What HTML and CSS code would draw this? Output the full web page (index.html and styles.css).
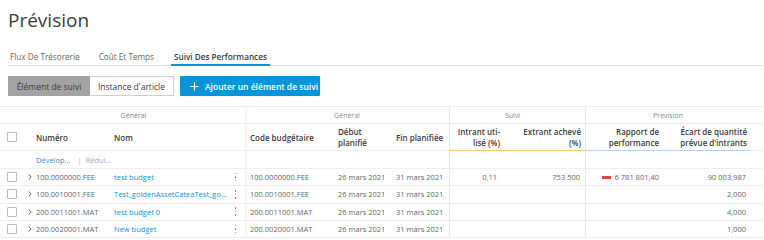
FILE: index.html
```html
<!DOCTYPE html>
<html lang="fr">
<head>
<meta charset="utf-8">
<title>Prévision</title>
<link rel="stylesheet" href="styles.css">
</head>
<body>
<div class="head">
  <h1 class="title">Prévision</h1>
  <nav class="tabs">
    <span class="tab">Flux De Trésorerie</span>
    <span class="tab">Coût Et Temps</span>
    <span class="tab active">Suivi Des Performances</span>
  </nav>
  <div class="toolbar">
    <div class="seg">
      <span class="seg-btn on">Élément de suivi</span>
      <span class="seg-btn">Instance d'article</span>
    </div>
    <button class="add-btn"><svg class="plus" width="9" height="9" viewBox="0 0 9 9"><path d="M4.5 0.5v8M0.5 4.5h8" stroke="#fff" stroke-width="1.1" fill="none"/></svg><span>Ajouter un élément de suivi</span></button>
  </div>
</div>

<div class="grid">
  <div class="row grp">
    <div class="c gcell g1">Général</div>
    <div class="c gcell g2 frz">Général</div>
    <div class="c gcell g3 vl">Suivi</div>
    <div class="c gcell g4 vl">Prévision</div>
    <div class="c gcell g5"></div>
  </div>
  <div class="row hdr">
    <div class="c"><span class="cb"></span></div>
    <div class="c pl">Numéro</div>
    <div class="c pl">Nom</div>
    <div class="c pl5 frz">Code budgétaire</div>
    <div class="c pl">Début<br>planifié</div>
    <div class="c pl">Fin planifiée</div>
    <div class="c r vl u-or pr5">Intrant uti-<br>lisé (%)</div>
    <div class="c r u-or pr4">Extrant achevé<br>(%)</div>
    <div class="c r vl u-bl pr6">Rapport de<br>performance</div>
    <div class="c r u-bl pr3">Écart de quantité<br>prévue d'intrants</div>
    <div class="c nob"></div>
  </div>
  <div class="row dev">
    <div class="c"></div>
    <div class="c pl span2"><span class="lnk2">Dévelop...</span><span class="sep">|</span><span class="mute">Rédui...</span></div>
    <div class="c frz"></div>
    <div class="c"></div>
    <div class="c"></div>
    <div class="c vl"></div>
    <div class="c"></div>
    <div class="c vl"></div>
    <div class="c"></div>
    <div class="c"></div>
  </div>

  <div class="row data">
    <div class="c"><span class="cb"></span></div>
    <div class="c num"><svg class="chev" width="4" height="6" viewBox="0 0 4 6"><path d="M0.6 0.5L3.2 3L0.6 5.5" stroke="#555" stroke-width="0.9" fill="none"/></svg>100.0000000.FEE</div>
    <div class="c pl name"><span class="lnk">test budget</span><span class="kebab"><i></i><i></i><i></i></span></div>
    <div class="c pl5 frz">100.0000000.FEE</div>
    <div class="c pl">26 mars 2021</div>
    <div class="c pl">31 mars 2021</div>
    <div class="c r vl pr8">0,11</div>
    <div class="c r pr5">753 500</div>
    <div class="c r vl pr6"><span class="bar"></span>6 781 801,40</div>
    <div class="c r pr4">90 003,987</div>
    <div class="c"></div>
  </div>
  <div class="row data">
    <div class="c"><span class="cb"></span></div>
    <div class="c num"><svg class="chev" width="4" height="6" viewBox="0 0 4 6"><path d="M0.6 0.5L3.2 3L0.6 5.5" stroke="#555" stroke-width="0.9" fill="none"/></svg>100.0010001.FEE</div>
    <div class="c pl name"><span class="lnk">Test_goldenAssetCateaTest_go...</span><span class="kebab"><i></i><i></i><i></i></span></div>
    <div class="c pl5 frz">100.0010001.FEE</div>
    <div class="c pl">26 mars 2021</div>
    <div class="c pl">31 mars 2021</div>
    <div class="c r vl pr8"></div>
    <div class="c r pr5"></div>
    <div class="c r vl pr6"></div>
    <div class="c r pr4">2,000</div>
    <div class="c"></div>
  </div>
  <div class="row data">
    <div class="c"><span class="cb"></span></div>
    <div class="c num"><svg class="chev" width="4" height="6" viewBox="0 0 4 6"><path d="M0.6 0.5L3.2 3L0.6 5.5" stroke="#555" stroke-width="0.9" fill="none"/></svg>200.0011001.MAT</div>
    <div class="c pl name"><span class="lnk">test budget 0</span><span class="kebab"><i></i><i></i><i></i></span></div>
    <div class="c pl5 frz">200.0011001.MAT</div>
    <div class="c pl">26 mars 2021</div>
    <div class="c pl">31 mars 2021</div>
    <div class="c r vl pr8"></div>
    <div class="c r pr5"></div>
    <div class="c r vl pr6"></div>
    <div class="c r pr4">4,000</div>
    <div class="c"></div>
  </div>
  <div class="row data">
    <div class="c"><span class="cb"></span></div>
    <div class="c num"><svg class="chev" width="4" height="6" viewBox="0 0 4 6"><path d="M0.6 0.5L3.2 3L0.6 5.5" stroke="#555" stroke-width="0.9" fill="none"/></svg>200.0020001.MAT</div>
    <div class="c pl name"><span class="lnk">New budget</span><span class="kebab"><i></i><i></i><i></i></span></div>
    <div class="c pl5 frz">200.0020001.MAT</div>
    <div class="c pl">26 mars 2021</div>
    <div class="c pl">31 mars 2021</div>
    <div class="c r vl pr8"></div>
    <div class="c r pr5"></div>
    <div class="c r vl pr6"></div>
    <div class="c r pr4">1,000</div>
    <div class="c"></div>
  </div>
</div>
</body>
</html>
```

FILE: styles.css
```css
* { box-sizing: border-box; }
html, body { margin: 0; background: #fff; }
body {
  font-family: "Open Sans", "Liberation Sans", sans-serif;
  color: #3c3c3c;
  overflow: hidden;
}
.head { padding-left: 8px; }
.title {
  margin: 0;
  padding-top: 8px;
  font-size: 19px;
  line-height: 24px;
  font-weight: 400;
  color: #3c3c3c;
}
.tabs {
  display: flex;
  gap: 15px;
  margin-top: 19px;
  border-bottom: 1px solid #e6e6e6;
  font-size: 8.2px;
  line-height: 11px;
}
.tab {
  padding: 0 2px 2px;
  color: #666;
  border-bottom: 2px solid transparent;
  margin-bottom: -1px;
}
.tab.active {
  color: #3c3c3c;
  font-weight: 600;
  border-bottom-color: #0696d7;
  padding: 0 3px 2px;
}
.toolbar {
  display: flex;
  gap: 6px;
  margin-top: 10px;
  height: 20px;
}
.seg { display: flex; }
.seg-btn {
  display: flex;
  align-items: center;
  justify-content: center;
  height: 20px;
  font-size: 8.5px;
  color: #3c3c3c;
  border: 1px solid #cfcfcf;
  white-space: nowrap;
}
.seg-btn.on { width: 82px; background: #a3a3a3; border-color: #a3a3a3; }
.seg-btn:not(.on) { width: 84px; border-left: 0; }
.add-btn {
  display: flex;
  align-items: center;
  gap: 6px;
  width: 140px;
  height: 20px;
  padding: 0 0 0 10px;
  border: 0;
  border-radius: 1px;
  background: #0696d7;
  color: #fff;
  font-family: inherit;
  font-size: 8.5px;
  font-weight: 600;
  white-space: nowrap;
}
.plus { flex: none; }

.grid {
  margin-top: 10px;
  width: 764px;
  font-size: 7.5px;
  color: #666;
}
.row {
  display: grid;
  grid-template-columns: 28px 78px 139px 85px 58px 61px 56px 80px 80px 85px 14px;
  border-bottom: 1px solid #eeeeee;
}
.c {
  display: flex;
  align-items: center;
  min-width: 0;
  white-space: nowrap;
}
.grp {
  height: 18px;
  border-top: 1px solid #ebebeb;
  color: #8a8a8a;
  font-size: 7px;
}
.gcell { justify-content: center; }
.g1 { grid-column: 1 / 4; padding-left: 22px; }
.g2 { grid-column: 4 / 7; }
.g3 { grid-column: 7 / 9; padding-right: 10px; }
.g4 { grid-column: 9 / 11; }
.g5 { grid-column: 11 / 12; }
.hdr {
  height: 27px;
  color: #3c3c3c;
  font-weight: 600;
  font-size: 8px;
  line-height: 11px;
  border-bottom: 0;
}
.hdr .c { border-bottom: 1px solid #eeeeee; }
.hdr .u-or { border-bottom: 1px solid #f8c57e; }
.hdr .u-bl { border-bottom: 1px solid #b9d2ea; }
.hdr .nob { border-bottom: 1px solid #eeeeee; }
.hdr .c.r { text-align: right; }
.dev { height: 18px; }
.span2 { grid-column: 2 / 4; }
.data { height: 17.25px; }

.pl { padding-left: 8px; }
.pl5 { padding-left: 5px; }
.r { justify-content: flex-end; }
.pr3 { padding-right: 3px; }
.pr4 { padding-right: 4px; }
.pr5 { padding-right: 5px; }
.pr6 { padding-right: 6px; }
.pr8 { padding-right: 8px; }
.vl { border-left: 1px solid #e8e8e8; }
.frz { background-image: linear-gradient(to right, rgba(0,0,0,0.05), rgba(0,0,0,0) 4px); }

.cb {
  display: block;
  width: 10px;
  height: 10px;
  margin-left: 7px;
  border: 1px solid #bdbdbd;
  border-radius: 1px;
  background: #fff;
}
.num { gap: 4px; }
.chev { flex: none; }
.name { justify-content: space-between; padding-right: 9px; }
.lnk { color: #0696d7; }
.kebab {
  display: flex;
  flex-direction: column;
  gap: 2px;
  flex: none;
}
.kebab i { display: block; width: 1.5px; height: 1.5px; background: #777; border-radius: 50%; }
.lnk2 { color: #3d8ccf; }
.sep { color: #bbb; margin: 0 4px 0 7px; }
.mute { color: #aaa; }
.bar {
  display: inline-block;
  width: 9px;
  height: 3px;
  background: #e8403a;
  margin-right: 4px;
}
```
